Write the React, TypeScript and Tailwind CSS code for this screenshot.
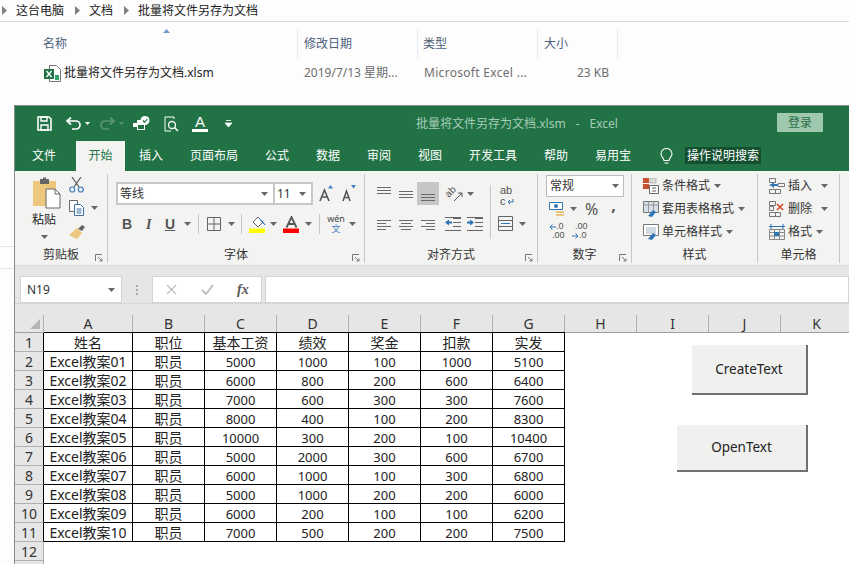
import type { ReactNode } from "react"

const cjk = "font-['Noto_Sans','Noto_Sans_CJK_SC',sans-serif]"

const columns = ["A", "B", "C", "D", "E", "F", "G", "H", "I", "J", "K"]
const colWidths = ["w-[89px]", "w-[72px]", "w-[72px]", "w-[72px]", "w-[72px]", "w-[72px]", "w-[72px]", "w-[72px]", "w-[72px]", "w-[72px]", "w-[72px]"]

const sheet = [
  ["姓名", "职位", "基本工资", "绩效", "奖金", "扣款", "实发"],
  ["Excel教案01", "职员", "5000", "1000", "100", "1000", "5100"],
  ["Excel教案02", "职员", "6000", "800", "200", "600", "6400"],
  ["Excel教案03", "职员", "7000", "600", "300", "300", "7600"],
  ["Excel教案04", "职员", "8000", "400", "100", "200", "8300"],
  ["Excel教案05", "职员", "10000", "300", "200", "100", "10400"],
  ["Excel教案06", "职员", "5000", "2000", "300", "600", "6700"],
  ["Excel教案07", "职员", "6000", "1000", "100", "300", "6800"],
  ["Excel教案08", "职员", "5000", "1000", "200", "200", "6000"],
  ["Excel教案09", "职员", "6000", "200", "100", "100", "6200"],
  ["Excel教案10", "职员", "7000", "500", "200", "200", "7500"],
]

const tabs = [
  { label: "插入", width: "w-[48px]" },
  { label: "页面布局", width: "w-[72px]" },
  { label: "公式", width: "w-[48px]" },
  { label: "数据", width: "w-[48px]" },
  { label: "审阅", width: "w-[48px]" },
  { label: "视图", width: "w-[48px]" },
  { label: "开发工具", width: "w-[72px]" },
  { label: "帮助", width: "w-[48px]" },
  { label: "易用宝", width: "w-[60px]" },
]

function Caret({ className = "" }: { className?: string }) {
  return (
    <svg width="7" height="4" viewBox="0 0 7 4" className={`shrink-0 ${className}`}>
      <path d="M0 0h7L3.500 4z" fill="#666" />
    </svg>
  )
}

function Launcher() {
  return (
    <svg width="8" height="8" viewBox="0 0 8 8" className="shrink-0">
      <path d="M.5 7V.5H7M3 3l4 4M7 4.500V7H4.500" fill="none" stroke="#777" />
    </svg>
  )
}

function Lines({ rows }: { rows: number[][] }) {
  return (
    <svg width="14" height="14" viewBox="0 0 14 14" className="shrink-0">
      {rows.map(([x, y, w], i) => (
        <path key={i} d={`M${x} ${y + 0.5}h${w}`} stroke="#6a6a6a" />
      ))}
    </svg>
  )
}

function Group({
  label,
  width,
  launcher,
  children,
}: {
  label: string
  width: string
  launcher?: boolean
  children: ReactNode
}) {
  return (
    <div className={`${width} shrink-0 flex flex-col border-r border-[#c6c6c6] mt-[3px] mb-[2px]`}>
      <div className="flex-1 min-h-0">{children}</div>
      <div className="h-[16px] flex items-center relative">
        <span className="flex-1 text-center text-[12px] leading-none text-[#333]">{label}</span>
        {launcher && (
          <span className="absolute right-[4px] top-[7px]">
            <Launcher />
          </span>
        )}
      </div>
    </div>
  )
}

function StyleRow({ icon, label, caret = "ml-[4px]" }: { icon: ReactNode; label: string; caret?: string }) {
  return (
    <div className="h-[23px] flex items-center text-[12px] text-[#333]">
      <span className="w-[19px] shrink-0">{icon}</span>
      <span className="leading-none">{label}</span>
      <Caret className={caret} />
    </div>
  )
}

function ClipboardGroup() {
  return (
    <div className="flex pl-[17px] pt-[3px]">
      <div className="w-[37px] flex flex-col items-start">
        <svg width="29" height="32" viewBox="0 0 29 32">
          <path d="M1 4h23v25H1z" fill="#eec77e" />
          <path d="M8 2h9v5H8z" fill="#666" />
          <path d="M11 .5h3v3h-3z" fill="#666" />
          <path d="M14 12h9l5 5v14H14z" fill="#fff" stroke="#666" />
          <path d="M23 12v5h5" fill="none" stroke="#666" />
        </svg>
        <span className="text-[12px] leading-none mt-[5px] text-[#222]">粘贴</span>
        <Caret className="mt-[9px] ml-[9px]" />
      </div>
      <div className="flex flex-col items-start">
        <svg width="15" height="16" viewBox="0 0 15 16">
          <path d="M3 0l7 10M12 0L5 10" stroke="#555" strokeWidth="1.200" fill="none" />
          <circle cx="3.200" cy="12.500" r="2.500" fill="none" stroke="#3d7ec2" strokeWidth="1.200" />
          <circle cx="11.800" cy="12.500" r="2.500" fill="none" stroke="#3d7ec2" strokeWidth="1.200" />
        </svg>
        <div className="flex items-center mt-[7px]">
          <svg width="16" height="16" viewBox="0 0 16 16">
            <path d="M.5.5h8v11h-8z" fill="#fff" stroke="#666" />
            <path d="M5.500 4.500h6l3 3v8h-9z" fill="#fff" stroke="#3d6fa5" />
            <path d="M7.500 9h5M7.500 11h5M7.500 13h5" stroke="#3d6fa5" />
          </svg>
          <Caret className="ml-[6px]" />
        </div>
        <svg width="17" height="15" viewBox="0 0 17 15" className="mt-[8px]">
          <path d="M9 5l4-4 3 2-3 4z" fill="#666" />
          <path d="M8 4l5 5-5 6-8-4z" fill="#eec77e" />
        </svg>
      </div>
    </div>
  )
}

function FontGroup() {
  return (
    <div className="pl-[8px] pt-[8px]">
      <div className="flex items-center">
        <div className="w-[157px] h-[23px] bg-white border-2 border-[#c8c8c8] border-r-0 flex items-center justify-between pl-[2px] pr-[5px] text-[12px] text-[#333]">
          <span>等线</span>
          <Caret />
        </div>
        <div className="w-[40px] h-[23px] bg-white border-2 border-[#c8c8c8] flex items-center justify-between pl-[2px] pr-[5px] text-[12px] text-[#333]">
          <span>11</span>
          <Caret />
        </div>
        <svg width="15" height="17" viewBox="0 0 15 17" className="ml-[6px]">
          <path d="M1 16L5.500 5 10 16M2.800 12h5.400" fill="none" stroke="#555" strokeWidth="1.600" />
          <path d="M9 3.500L11.500 0 14 3.500z" fill="#3d7ec2" />
        </svg>
        <svg width="15" height="17" viewBox="0 0 15 17" className="ml-[8px]">
          <path d="M1 16L4.500 6 8 16M2.300 12.500h4.400" fill="none" stroke="#555" strokeWidth="1.500" />
          <path d="M9 0h5l-2.500 3.500z" fill="#3d7ec2" />
        </svg>
      </div>
      <div className="flex items-center mt-[7px] h-[24px] text-[#555]">
        <span className="ml-[6px] w-[24px] text-[14px] font-bold font-['Liberation_Sans',sans-serif]">B</span>
        <span className="w-[19px] text-[14px] italic font-bold font-['Liberation_Serif',serif]">I</span>
        <span className="w-[17px] text-[14px] font-bold underline font-['Liberation_Sans',sans-serif]">U</span>
        <Caret className="ml-[2px]" />
        <span className="h-[20px] border-l border-[#c6c6c6] ml-[7px]" />
        <svg width="14" height="14" viewBox="0 0 14 14" className="ml-[8px]">
          <path d="M.5.5h13v13H.5zM7 .5v13M.5 7h13" fill="none" stroke="#666" />
        </svg>
        <Caret className="ml-[7px]" />
        <span className="h-[20px] border-l border-[#c6c6c6] ml-[6px]" />
        <svg width="17" height="17" viewBox="0 0 17 17" className="ml-[7px]">
          <path d="M4 6l5-5 5 5-5 5z" fill="#fff" stroke="#666" />
          <path d="M10 2l4 4 2 3-1-1z" fill="#3d7ec2" stroke="#3d7ec2" />
          <path d="M0 12.500h16V17H0z" fill="#ffff00" />
        </svg>
        <Caret className="ml-[4px]" />
        <svg width="17" height="17" viewBox="0 0 17 17" className="ml-[6px]">
          <path d="M3.500 11.500L8.500 1l5 10.500M5.500 8h6" fill="none" stroke="#555" strokeWidth="1.800" />
          <path d="M0 12.500h16V17H0z" fill="#ff0000" />
        </svg>
        <Caret className="ml-[5px]" />
        <span className="h-[20px] border-l border-[#c6c6c6] ml-[7px]" />
        <span className="ml-[8px] flex flex-col items-center w-[16px]">
          <span className="h-[10px] text-[9px] leading-[10px] text-[#444]">wén</span>
          <span className="h-[10px] text-[9px] leading-[10px] text-[#3d7ec2]">文</span>
        </span>
        <Caret className="ml-[5px]" />
      </div>
    </div>
  )
}

function AlignGroup() {
  return (
    <div className="flex pl-[12px] pt-[8px]">
      <div className="w-[113px]">
        <div className="flex items-center h-[23px]">
          <Lines rows={[[0, 0, 14], [0, 3, 14], [0, 6, 14]]} />
          <span className="ml-[8px]">
            <Lines rows={[[0, 4, 14], [0, 7, 14], [0, 10, 14]]} />
          </span>
          <span className="ml-[4px] w-[22px] h-[23px] bg-[#c6c6c6] flex items-center justify-center">
            <Lines rows={[[0, 7, 14], [0, 10, 14], [0, 13, 14]]} />
          </span>
          <span className="ml-[6px] w-[18px] h-[18px] relative flex items-center justify-center">
            <span className="block -rotate-45 text-[10px] leading-[10px] -translate-x-[3px] -translate-y-[2px] text-[#555] font-['Liberation_Sans',sans-serif]">
              ab
            </span>
            <svg width="10" height="10" viewBox="0 0 10 10" className="absolute right-0 bottom-[1px]">
              <path d="M1 9l8-8M5 1h4v4" fill="none" stroke="#555" />
            </svg>
          </span>
          <Caret className="ml-[4px]" />
        </div>
        <div className="flex items-center h-[23px] mt-[7px]">
          <Lines rows={[[0, 3, 14], [0, 6, 9], [0, 9, 14], [0, 12, 9]]} />
          <span className="ml-[8px]">
            <Lines rows={[[0, 3, 14], [2, 6, 10], [0, 9, 14], [2, 12, 10]]} />
          </span>
          <span className="ml-[8px]">
            <Lines rows={[[0, 3, 14], [5, 6, 9], [0, 9, 14], [5, 12, 9]]} />
          </span>
          <svg width="16" height="14" viewBox="0 0 16 14" className="ml-[10px]">
            <path d="M8 1.500h8M8 5.500h8M8 9.500h8M0 13.500h16M0 .5h16" stroke="#666" fill="none" />
            <path d="M0 5.500L4 2.500v2h3v2H4v2z" fill="#2e75b6" />
          </svg>
          <svg width="16" height="14" viewBox="0 0 16 14" className="ml-[6px]">
            <path d="M8 1.500h8M8 5.500h8M8 9.500h8M0 13.500h16M0 .5h16" stroke="#666" fill="none" />
            <path d="M7 5.500L3 2.500v2H0v2h3v2z" fill="#2e75b6" />
          </svg>
        </div>
      </div>
      <div className="border-l border-[#c6c6c6] h-[54px] mt-[3px] pl-[7px] flex flex-col">
        <div className="ml-[2px] h-[11px] text-[11px] leading-[11px] text-[#555] font-['Liberation_Sans',sans-serif]">ab</div>
        <div className="ml-[2px] h-[11px] flex items-center">
          <span className="text-[11px] leading-[11px] text-[#555] font-['Liberation_Sans',sans-serif]">c</span>
          <svg width="7" height="6" viewBox="0 0 7 6" className="ml-[1px]">
            <path d="M6 0v3H1M3 1L1 3l2 2" fill="none" stroke="#2e75b6" />
          </svg>
        </div>
        <div className="flex items-center mt-[9px]">
          <svg width="15" height="15" viewBox="0 0 15 15">
            <path d="M.5.5h14v14H.5zM.5 4.500h14M.5 10.500h14" fill="none" stroke="#666" />
            <path d="M3 7.500h9" stroke="#2e75b6" />
          </svg>
          <Caret className="ml-[6px]" />
        </div>
      </div>
    </div>
  )
}

function NumberGroup() {
  return (
    <div className="pl-[8px] pt-[1px]">
      <div className="w-[78px] h-[22px] bg-white border border-[#bcbcbc] flex items-center justify-between pl-[3px] pr-[4px] text-[12px] text-[#333]">
        <span>常规</span>
        <Caret />
      </div>
      <div className="flex items-center h-[20px] mt-[2px] pl-[3px]">
        <svg width="16" height="16" viewBox="0 0 16 16">
          <path d="M.5 1.500h13v7H.5z" fill="#fff" stroke="#2e75b6" />
          <circle cx="7" cy="5" r="2" fill="#2e75b6" />
          <path d="M7 10h8v2H7zM7 13h8v2H7z" fill="#eec77e" />
        </svg>
        <Caret className="ml-[5px]" />
        <span className="ml-[8px] text-[16px] leading-none text-[#555]">%</span>
        <span className="ml-[13px] text-[16px] leading-none font-bold text-[#555] -translate-y-[4px]">,</span>
      </div>
      <div className="flex items-center h-[20px] mt-[2px] pl-[3px]">
        <div className="w-[23px] font-['Liberation_Sans',sans-serif] text-[9px] leading-[9px] text-[#555]">
          <div className="h-[9px] flex items-center">
            <svg width="7" height="6" viewBox="0 0 7 6">
              <path d="M7 3H1M3.500.5L1 3l2.500 2.500" fill="none" stroke="#2e75b6" />
            </svg>
            <span>.0</span>
          </div>
          <div className="h-[9px] pl-[3px]">.00</div>
        </div>
        <div className="font-['Liberation_Sans',sans-serif] text-[9px] leading-[9px] text-[#555]">
          <div className="h-[9px] pl-[3px]">.00</div>
          <div className="h-[9px] flex items-center">
            <svg width="7" height="6" viewBox="0 0 7 6">
              <path d="M0 3h6M3.500.5L6 3 3.500 5.500" fill="none" stroke="#2e75b6" />
            </svg>
            <span>.0</span>
          </div>
        </div>
      </div>
    </div>
  )
}

const condIcon = (
  <svg width="16" height="16" viewBox="0 0 16 16">
    <path d="M0 0h6v5H0z" fill="#c8502d" />
    <path d="M7 0h6v5H7z" fill="#ddd" stroke="#888" strokeWidth=".5" />
    <path d="M0 6h6v5H0z" fill="#c8502d" />
    <path d="M6.500 7.500h9v8h-9z" fill="#fff" stroke="#666" />
    <path d="M9 10h4M9 13h4" stroke="#666" />
  </svg>
)

const tableIcon = (
  <svg width="16" height="16" viewBox="0 0 16 16">
    <path d="M.5.5h15v11H.5z" fill="#d7dfe8" stroke="#777" />
    <path d="M.5 4h15M5.500.5v11M10.500.5v11" stroke="#999" />
    <path d="M5 15l5-6 3 2-4 5z" fill="#2e75b6" />
  </svg>
)

const cellStyleIcon = (
  <svg width="16" height="16" viewBox="0 0 16 16">
    <path d="M.5.5h15v11H.5z" fill="#fff" stroke="#777" />
    <path d="M3 3h10v7H3z" fill="#cfd9e6" />
    <path d="M5 15l5-6 3 2-4 5z" fill="#2e75b6" />
  </svg>
)

const insertIcon = (
  <svg width="16" height="16" viewBox="0 0 16 16">
    <path d="M.5.5h6v4h-6zM.5 11.500h6v4h-6zM6.500 11.500h5v4h-5zM.5 7h4M9 5.500h6.500v3H9z" fill="none" stroke="#777" />
    <path d="M1 7l4-3v2h4v2H5v2z" fill="#2e75b6" />
  </svg>
)

const deleteIcon = (
  <svg width="16" height="16" viewBox="0 0 16 16">
    <path d="M.5.5h6v4h-6zM.5 5.500h4v4h-4zM.5 11.500h6v4h-6zM6.500 11.500h5v4h-5z" fill="none" stroke="#777" />
    <path d="M8 3l6 6M14 3L8 9" stroke="#d2492a" strokeWidth="1.600" />
  </svg>
)

const formatIcon = (
  <svg width="16" height="16" viewBox="0 0 16 16">
    <path d="M0 2.500h16M2 0v5M14 0v5" stroke="#2e75b6" />
    <path d="M.5 5.500h15v10H.5zM.5 8.500h15M.5 12h15M5.500 5.500v10M10.500 5.500v10" fill="none" stroke="#888" />
    <path d="M5 8h5v4H5z" fill="#2e75b6" />
  </svg>
)

function Ribbon() {
  return (
    <div className={`h-[94px] bg-[#f3f3f2] flex ${cjk}`}>
      <Group label="剪贴板" width="w-[93px]" launcher>
        <ClipboardGroup />
      </Group>
      <Group label="字体" width="w-[257px]" launcher>
        <FontGroup />
      </Group>
      <Group label="对齐方式" width="w-[173px]" launcher>
        <AlignGroup />
      </Group>
      <Group label="数字" width="w-[94px]" launcher>
        <NumberGroup />
      </Group>
      <Group label="样式" width="w-[126px]">
        <div className="pl-[11px]">
          <StyleRow icon={condIcon} label="条件格式" />
          <StyleRow icon={tableIcon} label="套用表格格式" />
          <StyleRow icon={cellStyleIcon} label="单元格样式" />
        </div>
      </Group>
      <Group label="单元格" width="w-[82px]">
        <div className="pl-[11px]">
          <StyleRow icon={insertIcon} label="插入" caret="ml-[9px]" />
          <StyleRow icon={deleteIcon} label="删除" caret="ml-[9px]" />
          <StyleRow icon={formatIcon} label="格式" caret="ml-[4px]" />
        </div>
      </Group>
    </div>
  )
}

function TitleBar() {
  return (
    <div className={`h-[35px] flex items-center relative ${cjk}`}>
      <svg width="15" height="15" viewBox="0 0 15 15" className="ml-[22px]">
        <path d="M1 1h11l2 2v11H1z" fill="none" stroke="#fff" strokeWidth="1.600" />
        <path d="M4 1h6v4H4zM4 9h7v5H4z" fill="none" stroke="#fff" strokeWidth="1.400" />
      </svg>
      <svg width="15" height="13" viewBox="0 0 15 13" className="ml-[14px]">
        <path d="M5 .5L1 4l4 3.500M1.500 4H10a4 4 0 0 1 0 8H6" fill="none" stroke="#fff" strokeWidth="1.700" />
      </svg>
      <svg width="5" height="3" viewBox="0 0 5 3" className="ml-[4px]">
        <path d="M0 0h5L2.500 3z" fill="#fff" />
      </svg>
      <svg width="15" height="13" viewBox="0 0 15 13" className="ml-[10px]">
        <path d="M10 .5L14 4l-4 3.500M13.500 4H5a4 4 0 0 0 0 8h4" fill="none" stroke="#5c9476" strokeWidth="1.700" />
      </svg>
      <svg width="5" height="3" viewBox="0 0 5 3" className="ml-[4px]">
        <path d="M0 0h5L2.500 3z" fill="#5c9476" />
      </svg>
      <svg width="17" height="16" viewBox="0 0 17 16" className="ml-[9px]">
        <path d="M0 7h4V4h8v10H4v-3H0z" fill="#fff" />
        <circle cx="12" cy="4.500" r="4.500" fill="#fff" />
        <path d="M9.800 4.500l1.700 1.700 2.800-3" fill="none" stroke="#217346" strokeWidth="1.200" />
        <path d="M5 9h6v4H5z" fill="#217346" />
      </svg>
      <svg width="15" height="16" viewBox="0 0 15 16" className="ml-[14px]">
        <path d="M10 3V1H1v14h6" fill="none" stroke="#fff" />
        <circle cx="8" cy="9" r="3.500" fill="none" stroke="#fff" strokeWidth="1.300" />
        <path d="M10.500 11.500l3.500 3.500" stroke="#fff" strokeWidth="1.600" />
      </svg>
      <span className="ml-[13px] w-[16px] flex flex-col items-center">
        <span className="text-[15px] leading-[13px] text-white font-['Liberation_Sans',sans-serif]">A</span>
        <span className="w-[16px] h-[3px] bg-white mt-[1px]" />
      </span>
      <svg width="7" height="7" viewBox="0 0 7 7" className="ml-[17px]">
        <path d="M1 .5h5M0 3h7L3.500 7z" stroke="#fff" strokeWidth=".8" fill="#fff" />
      </svg>
      <span className="absolute left-[401px] text-[12px] leading-none text-[#a5cbb6] whitespace-pre">
        批量将文件另存为文档.xlsm<span className="px-[10px]">-</span>Excel
      </span>
      <span className="absolute left-[762px] top-[7px] w-[46px] h-[19px] bg-[#9fc8ae] rounded-[1px] text-[12px] leading-[19px] text-center text-[#2b6f4a]">
        登录
      </span>
    </div>
  )
}

function TabBar() {
  return (
    <div className={`h-[30px] flex text-[12px] text-white ${cjk}`}>
      <div className="ml-[5px] w-[48px] flex items-center justify-center">文件</div>
      <div className="ml-[8px] w-[49px] flex items-center justify-center bg-[#f3f3f2] text-[#217346]">开始</div>
      {tabs.map((tab, i) => (
        <div key={tab.label} className={`${i === 0 ? "ml-[2px]" : "ml-[3px]"} ${tab.width} flex items-center justify-center`}>
          {tab.label}
        </div>
      ))}
      <svg width="13" height="17" viewBox="0 0 13 17" className="ml-[17px] mt-[7px]">
        <path d="M4 12.500C4 10 1 9 1 6a5.500 5.500 0 0 1 11 0c0 3-3 4-3 6.500zM4.500 15h4" fill="none" stroke="#fff" strokeWidth="1.100" />
      </svg>
      <div className="ml-[12px] mt-[6px] h-[17px] w-[76px] bg-[#14502f] flex items-center justify-center leading-none">
        操作说明搜索
      </div>
    </div>
  )
}

function FormulaBar() {
  return (
    <div className={`h-[39px] shrink-0 bg-[#e6e6e6] border-t border-[#d0d0d0] border-b border-b-[#c8c8c8] border-dotted flex pt-[10px] ${cjk}`}>
      <div className="ml-[5px] w-[102px] h-[27px] bg-white border border-[#d4d4d4] flex items-center justify-between pl-[6px] pr-[6px] text-[12px] text-[#333] font-['Noto_Sans',sans-serif]">
        <span>N19</span>
        <Caret />
      </div>
      <div className="w-[30px] flex flex-col items-center justify-center gap-[2px]">
        <span className="w-[2px] h-[2px] bg-[#aaa]" />
        <span className="w-[2px] h-[2px] bg-[#aaa]" />
        <span className="w-[2px] h-[2px] bg-[#aaa]" />
      </div>
      <div className="w-[110px] h-[27px] bg-white border border-[#d4d4d4] flex items-center pl-[13px]">
        <svg width="11" height="11" viewBox="0 0 11 11">
          <path d="M1 1l9 9M10 1l-9 9" stroke="#c0c0c0" strokeWidth="1.400" />
        </svg>
        <svg width="13" height="11" viewBox="0 0 13 11" className="ml-[24px]">
          <path d="M1 6l4 4 7-9" fill="none" stroke="#c0c0c0" strokeWidth="2" />
        </svg>
        <span className="ml-[23px] text-[14px] italic font-bold leading-none text-[#555] font-['Liberation_Serif',serif]">
          fx
        </span>
      </div>
      <div className="ml-[3px] flex-1 h-[27px] bg-white border border-[#d4d4d4]" />
    </div>
  )
}

function Sheet() {
  return (
    <div className={`flex-1 bg-white relative overflow-hidden text-[14px] text-[#222] ${cjk}`}>
      <div className="h-[11px] bg-[#e6e6e6]" />
      {/* column letters */}
      <div className="h-[18px] flex bg-[#e6e6e6] border-b border-[#a0a0a0] leading-[18px]">
        <div className="w-[29px] shrink-0 border-r border-[#b0b0b0] flex items-end justify-end pr-[3px] pb-[3px]">
          <svg width="10" height="10" viewBox="0 0 10 10">
            <path d="M10 0v10H0z" fill="#b4b4b4" />
          </svg>
        </div>
        {columns.map((col, i) => (
          <div key={col} className={`${colWidths[i]} shrink-0 border-r border-[#b0b0b0] text-center text-[14px] text-[#333]`}>
            {col}
          </div>
        ))}
      </div>
      {sheet.map((row, r) => (
        <div key={r} className="h-[19px] flex leading-[20px]">
          <div className="w-[29px] shrink-0 bg-[#e6e6e6] border-b border-[#b0b0b0] border-r border-r-black text-center text-[14px] text-[#333]">
            {r + 1}
          </div>
          {row.map((cell, c) => (
            <div
              key={c}
              className={`${colWidths[c]} shrink-0 border-r border-b border-black text-center whitespace-nowrap ${/^\d+$/.test(cell) ? "text-[13px]" : ""} ${r === 0 ? "border-t -mt-px h-[20px]" : ""}`}
            >
              {cell}
            </div>
          ))}
        </div>
      ))}
      <div className="h-[19px] w-[29px] bg-[#e6e6e6] border-b border-r border-[#b0b0b0] text-center text-[14px] leading-[20px] text-[#333]">
        12
      </div>
      <div className="h-[10px] w-[29px] bg-[#e6e6e6] border-r border-[#b0b0b0]" />
      {/* sheet buttons */}
      <div className="absolute left-[677px] top-[41px] w-[116px] h-[50px] bg-[#f0f0ee] border-r-2 border-b-2 border-[#707070] flex items-center justify-center text-[13.5px]">
        CreateText
      </div>
      <div className="absolute left-[662px] top-[121px] w-[131px] h-[47px] bg-[#f0f0ee] border-r-2 border-b-2 border-[#707070] flex items-center justify-center text-[13.5px]">
        OpenText
      </div>
    </div>
  )
}

function Explorer() {
  const Arrow = () => (
    <svg width="5" height="9" viewBox="0 0 5 9" className="shrink-0">
      <path d="M0 0l5 4.500L0 9z" fill="#808080" />
    </svg>
  )
  return (
    <div className={`h-[105px] shrink-0 ${cjk}`}>
      <div className="h-[22px] border-b border-[#d9d9d9] flex items-center pl-[2px] text-[12px] text-[#222]">
        <Arrow />
        <span className="ml-[9px]">这台电脑</span>
        <span className="ml-[11px]"><Arrow /></span>
        <span className="ml-[9px]">文档</span>
        <span className="ml-[11px]"><Arrow /></span>
        <span className="ml-[9px]">批量将文件另存为文档</span>
      </div>
      <div className="h-[28px] mt-[8px] flex text-[12px] text-[#4c607a] relative">
        <span className="absolute left-[163px] -top-[1px]">
          <svg width="7" height="4" viewBox="0 0 7 4" className="block">
            <path d="M0 4l3.500-4L7 4z" fill="#6f9ec9" />
          </svg>
        </span>
        <div className="w-[298px] shrink-0 border-r border-[#e3ebf3] pl-[43px] flex items-center">名称</div>
        <div className="w-[120px] shrink-0 border-r border-[#e3ebf3] pl-[6px] flex items-center">修改日期</div>
        <div className="w-[120px] shrink-0 border-r border-[#e3ebf3] pl-[5px] flex items-center">类型</div>
        <div className="w-[80px] shrink-0 border-r border-[#e3ebf3] pl-[6px] flex items-center">大小</div>
      </div>
      <div className="h-[22px] mt-[4px] flex items-center text-[12px] text-[#6d6d6d]">
        <div className="w-[298px] shrink-0 pl-[44px] flex items-center text-[#222]">
          <svg width="17" height="17" viewBox="0 0 17 17" className="shrink-0">
            <path d="M5.500.5h7l4 4v12h-11z" fill="#fff" stroke="#777" />
            <path d="M0 4h10v10H0z" fill="#217346" />
            <path d="M2.500 6l5 6M7.500 6l-5 6" stroke="#fff" strokeWidth="1.300" />
            <path d="M11 10h4v5h-4z" fill="#2fa36b" />
          </svg>
          <span className="ml-[3px]">批量将文件另存为文档.xlsm</span>
        </div>
        <div className="w-[120px] shrink-0 pl-[6px] whitespace-nowrap">2019/7/13 星期...</div>
        <div className="w-[120px] shrink-0 pl-[6px] whitespace-nowrap tracking-[.3px]">Microsoft Excel ...</div>
        <div className="w-[71px] shrink-0 text-right">23 KB</div>
      </div>
    </div>
  )
}

export default function App() {
  return (
    <div className="w-[849px] h-[564px] overflow-hidden bg-[#fdfdfd] flex flex-col">
      <Explorer />
      <div className="flex-1 min-h-0 flex">
        <div className="w-[14px] shrink-0 pt-[141px]">
          <div className="h-[23px] border-y border-[#e4e4e4]" />
        </div>
        <div className="flex-1 min-w-0 flex flex-col border-l border-t border-[#8a8a8a]">
          <div className="bg-[#217346]">
            <TitleBar />
            <TabBar />
          </div>
          <Ribbon />
          <FormulaBar />
          <Sheet />
        </div>
      </div>
    </div>
  )
}
